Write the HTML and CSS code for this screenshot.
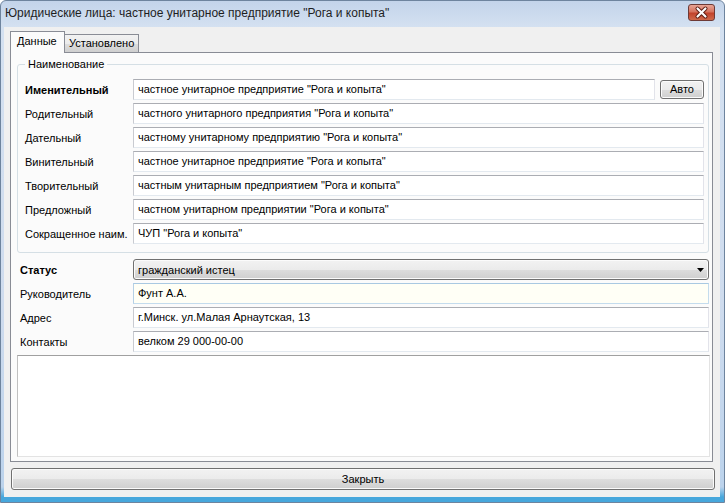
FILE: index.html
```html
<!DOCTYPE html>
<html lang="ru">
<head>
<meta charset="utf-8">
<title>Юридические лица</title>
<link rel="stylesheet" href="styles.css">
</head>
<body>
<div class="window">
  <div class="titlebar">
    <span class="title">Юридические лица: частное унитарное предприятие "Рога и копыта"</span>
    <div class="close-x">
      <svg width="27" height="17" viewBox="0 0 27 17">
        <path d="M9.5 4.5 L17.5 12.5 M17.5 4.5 L9.5 12.5" stroke="#5a1a10" stroke-width="4" stroke-linecap="round" fill="none"/>
        <path d="M9.5 4.5 L17.5 12.5 M17.5 4.5 L9.5 12.5" stroke="#ffffff" stroke-width="2.2" stroke-linecap="round" fill="none"/>
      </svg>
    </div>
  </div>
  <div class="client">
    <div class="tabs">
      <div class="tab active">Данные</div>
      <div class="tab">Установлено</div>
    </div>
    <div class="page">
      <div class="group">
        <div class="group-title">Наименование</div>
        <div class="grid name-grid">
          <div class="label bold">Именительный</div>
          <div class="input">частное унитарное предприятие "Рога и копыта"</div>
          <div class="btn auto">Авто</div>
          <div class="label">Родительный</div>
          <div class="input wide">частного унитарного предприятия "Рога и копыта"</div>
          <div class="label">Дательный</div>
          <div class="input wide">частному унитарному предприятию "Рога и копыта"</div>
          <div class="label">Винительный</div>
          <div class="input wide">частное унитарное предприятие "Рога и копыта"</div>
          <div class="label">Творительный</div>
          <div class="input wide">частным унитарным предприятием "Рога и копыта"</div>
          <div class="label">Предложный</div>
          <div class="input wide">частном унитарном предприятии "Рога и копыта"</div>
          <div class="label">Сокращенное наим.</div>
          <div class="input wide">ЧУП "Рога и копыта"</div>
        </div>
      </div>
      <div class="grid status-grid">
        <div class="label bold">Статус</div>
        <div class="combo">
          <span>гражданский истец</span>
          <svg class="arrow" width="7" height="4" viewBox="0 0 7 4"><path d="M0 0 H7 L3.5 4 Z" fill="#000"/></svg>
        </div>
        <div class="label">Руководитель</div>
        <div class="input focus">Фунт А.А.</div>
        <div class="label">Адрес</div>
        <div class="input">г.Минск. ул.Малая Арнаутская, 13</div>
        <div class="label">Контакты</div>
        <div class="input">велком 29 000-00-00</div>
      </div>
      <div class="memo"></div>
    </div>
    <div class="btn close-btn">Закрыть</div>
  </div>
</div>
</body>
</html>
```
FILE: styles.css
```css
html, body {
  margin: 0;
  padding: 0;
}
body {
  width: 725px;
  height: 503px;
  overflow: hidden;
  font-family: "Liberation Sans", Arial, sans-serif;
  font-size: 11px;
  color: #000;
  background: #ffffff;
}
.window {
  box-sizing: border-box;
  width: 725px;
  height: 503px;
  display: flex;
  flex-direction: column;
  border: 1px solid #6e849e;
  border-radius: 6px 6px 0 0;
  padding: 0 4px 5px 3px;
  background: linear-gradient(to bottom, #c3d4ea 0px, #d4e1f1 26px, #cfdcee 60%, #bcd3ec 97%, #47a7dc 99%);
}
.titlebar {
  height: 26px;
  display: flex;
  align-items: center;
  padding-left: 1px;
}
.title {
  font-size: 12px;
  color: #1e1e1e;
  flex: 1;
  white-space: nowrap;
  margin-top: -3px;
}
.close-x {
  width: 27px;
  height: 17px;
  margin-right: 5px;
  margin-top: -4px;
  box-sizing: border-box;
  border: 1px solid #6d3a36;
  border-radius: 3px;
  background: linear-gradient(to bottom, #e8a596 0%, #d5735f 45%, #c2432c 55%, #cf6a4c 100%);
  display: flex;
}
.close-x svg {
  margin: -1px;
}
.client {
  flex: 1;
  display: flex;
  flex-direction: column;
  background: #f0f0f0;
  padding: 4px 0 7px 0;
}
.tabs {
  height: 21px;
  display: flex;
  align-items: flex-end;
  padding-left: 6px;
  position: relative;
  z-index: 1;
}
.tab {
  box-sizing: border-box;
  height: 18px;
  padding: 0 4px 0 4px;
  line-height: 16px;
  border: 1px solid #898c95;
  border-bottom: none;
  border-left: none;
  background: linear-gradient(to bottom, #f2f2f2 0%, #ebebeb 50%, #dddddd 51%, #cfcfcf 100%);
}
.tab.active {
  height: 22px;
  margin-bottom: -1px;
  padding: 0 9px 0 6px;
  line-height: 19px;
  border-left: 1px solid #898c95;
  background: #fbfbfb;
  width: 55px;
}
.page {
  box-sizing: border-box;
  height: 410px;
  margin: 0 7px 0 6px;
  border: 1px solid #898c95;
  background: #fbfbfb;
  display: flex;
  flex-direction: column;
  padding-bottom: 4px;
}
.group {
  margin: 11px 3px 0 6px;
  border: 1px solid #d5dfe5;
  border-radius: 3px;
  padding: 0 4px 8px 0;
}
.group-title {
  width: fit-content;
  margin: -7px 0 0 7px;
  padding: 0 3px;
  line-height: 13px;
  background: #fbfbfb;
}
.grid {
  display: grid;
  row-gap: 3px;
  align-items: center;
}
.name-grid {
  margin-top: 8px;
  grid-template-columns: 115px 1fr 44px;
  column-gap: 0;
}
.name-grid .label {
  padding-left: 7px;
}
.status-grid {
  margin: 6px 3px 0 9px;
  grid-template-columns: 113px 1fr;
}
.label {
  white-space: nowrap;
}
.bold {
  font-weight: bold;
}
.input {
  box-sizing: border-box;
  height: 21px;
  line-height: 19px;
  padding-left: 4px;
  background: #ffffff;
  border: 1px solid;
  border-color: #abadb3 #e2e3ea #e3e9ef #c9cbd1;
  white-space: nowrap;
  overflow: hidden;
}
.name-grid .input {
  margin-right: 5px;
}
.name-grid .input.wide {
  grid-column: 2 / 4;
  margin-right: 0;
}
.input.focus {
  background: #fffff6;
  border-color: #a9c9e2 #c4dced #c4dced #b5d0e6;
}
.btn {
  box-sizing: border-box;
  border: 1px solid #707070;
  border-radius: 3px;
  background: linear-gradient(to bottom, #f2f2f2 0%, #ebebeb 50%, #dddddd 51%, #cfcfcf 100%);
  text-align: center;
  box-shadow: inset 0 0 0 1px #fbfbfb;
}
.auto {
  height: 19px;
  line-height: 17px;
}
.combo {
  box-sizing: border-box;
  height: 21px;
  border: 1px solid #707070;
  border-radius: 3px;
  background: linear-gradient(to bottom, #f2f2f2 0%, #ebebeb 50%, #dddddd 51%, #cfcfcf 100%);
  box-shadow: inset 0 0 0 1px #fbfbfb;
  display: flex;
  align-items: center;
  padding: 0 4px 0 4px;
}
.combo span {
  flex: 1;
}
.memo {
  box-sizing: border-box;
  height: 102px;
  margin: 3px 2px 0 6px;
  background: #ffffff;
  border: 1px solid;
  border-color: #a0a0a0 #e3e3e3 #e3e3e3 #c0c0c0;
}
.close-btn {
  height: 22px;
  line-height: 20px;
  margin: 6px 5px 0 7px;
}
```
